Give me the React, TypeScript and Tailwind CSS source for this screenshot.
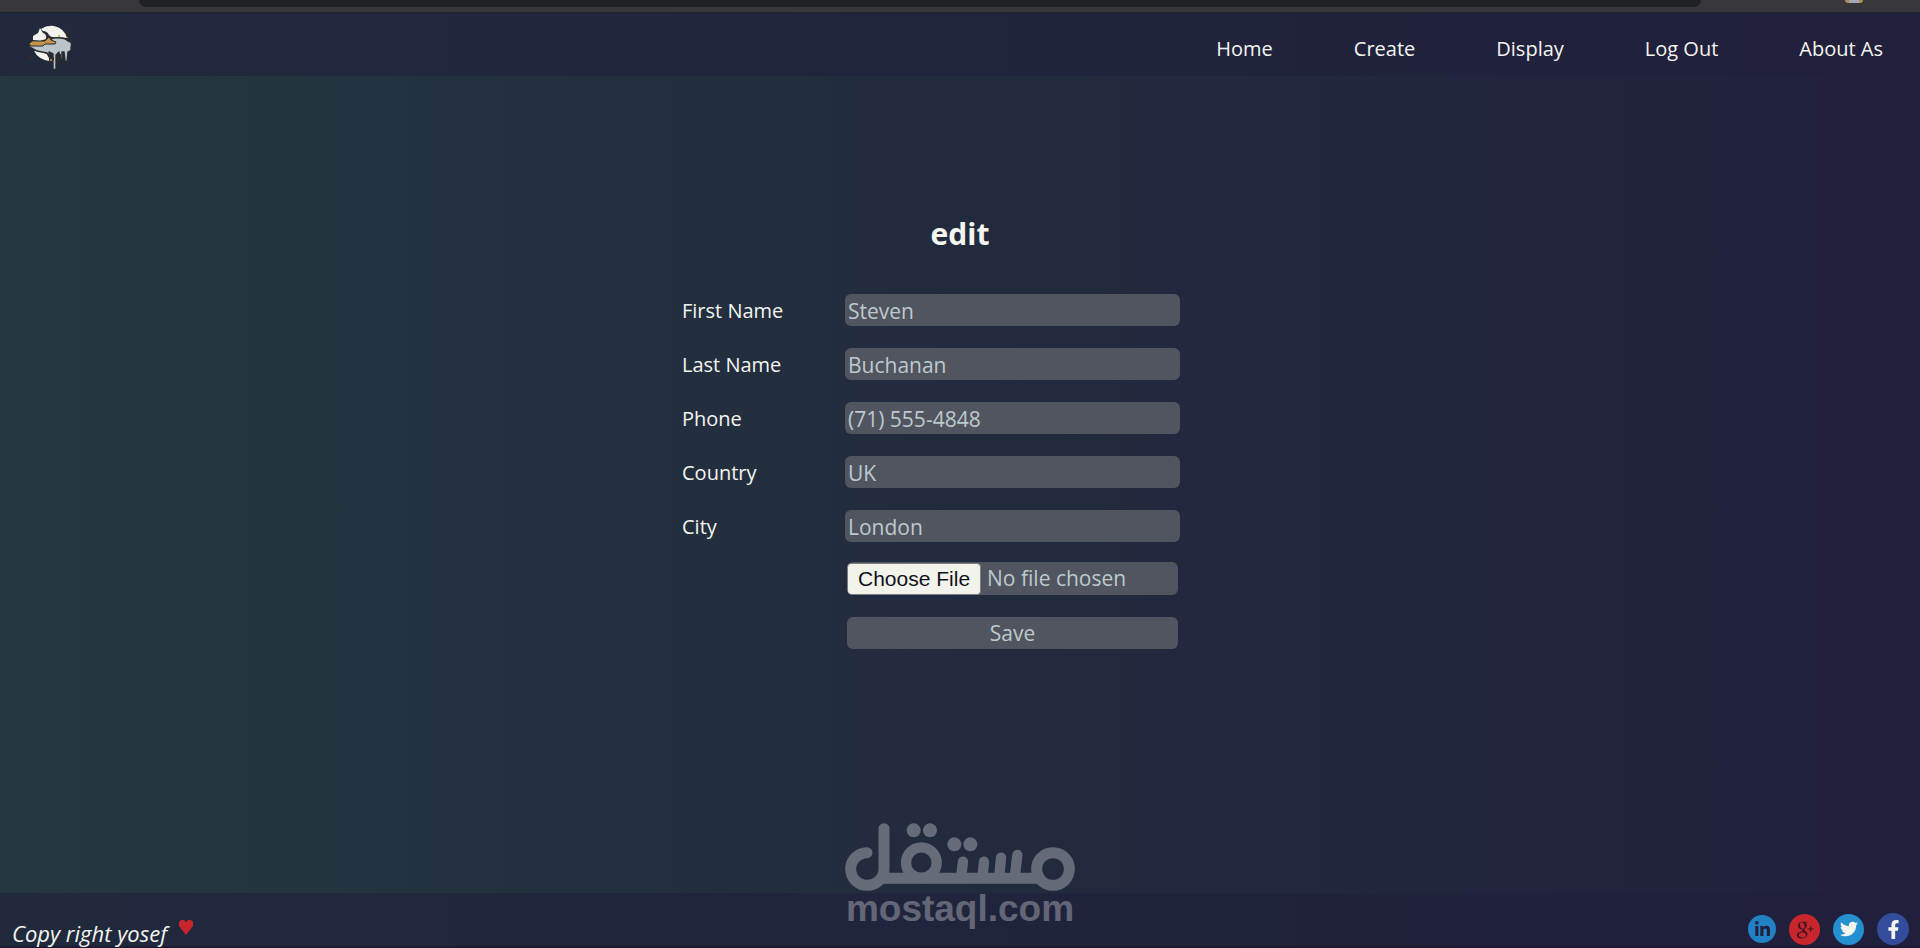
import { FaFacebookF, FaLinkedinIn, FaTwitter } from "react-icons/fa";
import { TiSocialGooglePlus } from "react-icons/ti";

const navLinks = ["Home", "Create", "Display", "Log Out", "About As"];

const fields = [
  { id: "firstName", label: "First Name", value: "Steven" },
  { id: "lastName", label: "Last Name", value: "Buchanan" },
  { id: "phone", label: "Phone", value: "(71) 555-4848" },
  { id: "country", label: "Country", value: "UK" },
  { id: "city", label: "City", value: "London" },
];

function CloudLogo() {
  return (
    <svg className="h-[60px] w-[60px]" viewBox="0 0 60 60" aria-hidden="true">
      <circle cx="33" cy="30" r="18" fill="#2a2b33" />
      <path d="M21 14 Q27 10 34 11 Q44 13 47 23 L37 22 Q31 23 29 20 Q27 16 23 16 Z" fill="#f1f3ec" />
      <path d="M13 25 L13 21 L18 18 L20 13 L23 18 Q27 19 26 24 L20 26 Z" fill="#f1f3ec" />
      <path d="M14 36 L22 37 L29 40 L29 46 Q18 44 14 36 Z" fill="#f1f3ec" />
      <path
        d="M8 29 L28 27 L33 23 Q45 22 48 26 Q53 27 51 32 Q52 36 48 37 L47 47 L45 46 L44 37 L42 37 L42 44 L40 44 L39 37 L36 40 L36 55 L33 54 L33 39 L29 37 L29 42 L27 38 L17 36 L10 32 Z"
        fill="#b9c5c8"
        stroke="#2a2b33"
        strokeWidth="1.4"
        strokeLinejoin="round"
      />
      <path d="M9 29 L12 26 L25 26 L29 22 L31 25 L36 27 L35 29 L25 29 L23 31 L11 31 Z" fill="#c69448" stroke="#2a2b33" strokeWidth="1" />
      <path d="M33 45 V42 M30 44 V47 M40 39 V46 M44 41 V48" stroke="#2a2b33" strokeWidth="2" />
      <path d="M31 44 V46 M47 22 V23 M38 21 H40" stroke="#d29a43" strokeWidth="1.5" />
      <circle cx="11" cy="43" r="2.5" fill="#2a2b33" />
      <circle cx="48" cy="17" r="2" fill="#2a2b33" />
      <circle cx="24" cy="50" r="1" fill="#2a2b33" />
    </svg>
  );
}

function Watermark() {
  return (
    <div className="pointer-events-none absolute bottom-[22px] left-1/2 flex w-[230px] -translate-x-1/2 flex-col items-center text-white opacity-30">
      <svg className="h-[68px] w-[230px]" viewBox="75 68 690 204" aria-label="mostaql" role="img">
        <g fill="none" stroke="currentColor" strokeWidth="33" strokeLinecap="round">
          <circle cx="699" cy="206" r="49" />
          <circle cx="304" cy="187" r="46" strokeWidth="31" />
          <path d="M192 85 V206 A50 49 0 1 1 141 157" />
          <path d="M180 234 H670" strokeLinecap="butt" />
          <path d="M592 164 L585 225 M543 172 L538 225 M492 184 L488 225 M429 184 L424 225" strokeWidth="31" />
        </g>
        <g fill="currentColor">
          <circle cx="281" cy="90" r="21" />
          <circle cx="330" cy="90" r="21" />
          <circle cx="403" cy="132" r="21" />
          <circle cx="451" cy="132" r="21" />
        </g>
      </svg>
      <span className="font-['Liberation_Sans',sans-serif] text-[37px] leading-[35px] font-bold">mostaql.com</span>
    </div>
  );
}

export default function App() {
  return (
    <div className="relative flex min-h-screen flex-col bg-linear-to-r from-[#243840] via-[#222b3e] to-[#21203c] font-['Open_Sans',sans-serif] text-xl text-[#f4f5ee]">
      <div className="flex h-[13px] items-start border-b border-[#222326] bg-[#37363b] pr-[57px] pl-[139px]">
        <div className="h-[7px] flex-1 rounded-b-lg bg-[#202124]" />
        <div className="ml-[144px] h-[3px] w-[18px] rounded-b-full border-x-4 border-[#b08a58] bg-[#a3a8b4]" />
      </div>

      <header className="flex h-[63px] items-center justify-between bg-[#20203c]/60 pr-[37px] pl-5">
        <a href="#home" aria-label="Home page">
          <CloudLogo />
        </a>
        <nav className="flex gap-[81px] pt-2">
          {navLinks.map((link) => (
            <a key={link} href="#">
              {link}
            </a>
          ))}
        </nav>
      </header>

      <main className="flex flex-1 flex-col items-center pt-[138px] pb-16">
        <h1 className="text-[30px] leading-10 font-bold">edit</h1>
        <form className="mt-10 flex flex-col gap-[22px] pr-[58px]" onSubmit={(e) => e.preventDefault()}>
          {fields.map((field) => (
            <div key={field.id} className="grid grid-cols-[163px_335px] items-center">
              <label htmlFor={field.id} className="pt-0.5 leading-7">
                {field.label}
              </label>
              <input
                id={field.id}
                type="text"
                defaultValue={field.value}
                className="h-8 rounded-md bg-[#51555f] px-[3px] pt-0.5 text-[21px] text-[#bccacd]"
              />
            </div>
          ))}
          <input
            type="file"
            aria-label="Photo"
            className="-mt-0.5 ml-[165px] h-[33px] w-[331px] overflow-hidden rounded-md bg-[#51555f] text-[21px] leading-8 text-[#bccacd] file:mr-[6px] file:h-8 file:rounded-sm file:border file:border-[#7b7d83] file:bg-[#f2f4ec] file:px-[10px] file:font-['Liberation_Sans',sans-serif] file:text-[21px] file:leading-7 file:text-[#10101c]"
          />
          <button type="submit" className="ml-[165px] h-8 w-[331px] rounded-md bg-[#51555f] text-[21px] leading-8 text-[#bccacd]">
            Save
          </button>
        </form>
      </main>

      <footer className="flex h-[55px] items-end justify-between border-b-2 border-[#1b1a30] bg-[#20203c]/60 pr-[11px] pl-3">
        <p className="flex items-end gap-3 text-[22px] leading-[26px] font-medium italic">
          Copy right yosef
          <svg className="mb-[11px] h-[15px] w-[14px]" viewBox="0 0 14 15" fill="#c9252c" aria-hidden="true">
            <path d="M0 2 L2 0 H5 L7 2 L9 0 H12 L14 2 V6 L7 15 L0 6 Z" />
          </svg>
        </p>
        <div className="mb-px flex items-center gap-[13px]">
          <a href="#linkedin" aria-label="LinkedIn" className="flex h-7 w-7 items-center justify-center rounded-full bg-[#2280c4] text-[#20203c]">
            <FaLinkedinIn size={17} />
          </a>
          <a href="#google" aria-label="Google Plus" className="flex h-[31px] w-[31px] items-center justify-center rounded-full bg-[#c9252c] text-[#3a1522]">
            <TiSocialGooglePlus size={27} />
          </a>
          <a href="#twitter" aria-label="Twitter" className="flex h-[31px] w-[31px] items-center justify-center rounded-full bg-[#2490d0] text-[#f4f5ee]">
            <FaTwitter size={18} />
          </a>
          <a href="#facebook" aria-label="Facebook" className="flex h-8 w-8 items-center justify-center rounded-full bg-[#344c9c] text-[#f4f5ee]">
            <FaFacebookF size={19} />
          </a>
        </div>
      </footer>

      <Watermark />
    </div>
  );
}
